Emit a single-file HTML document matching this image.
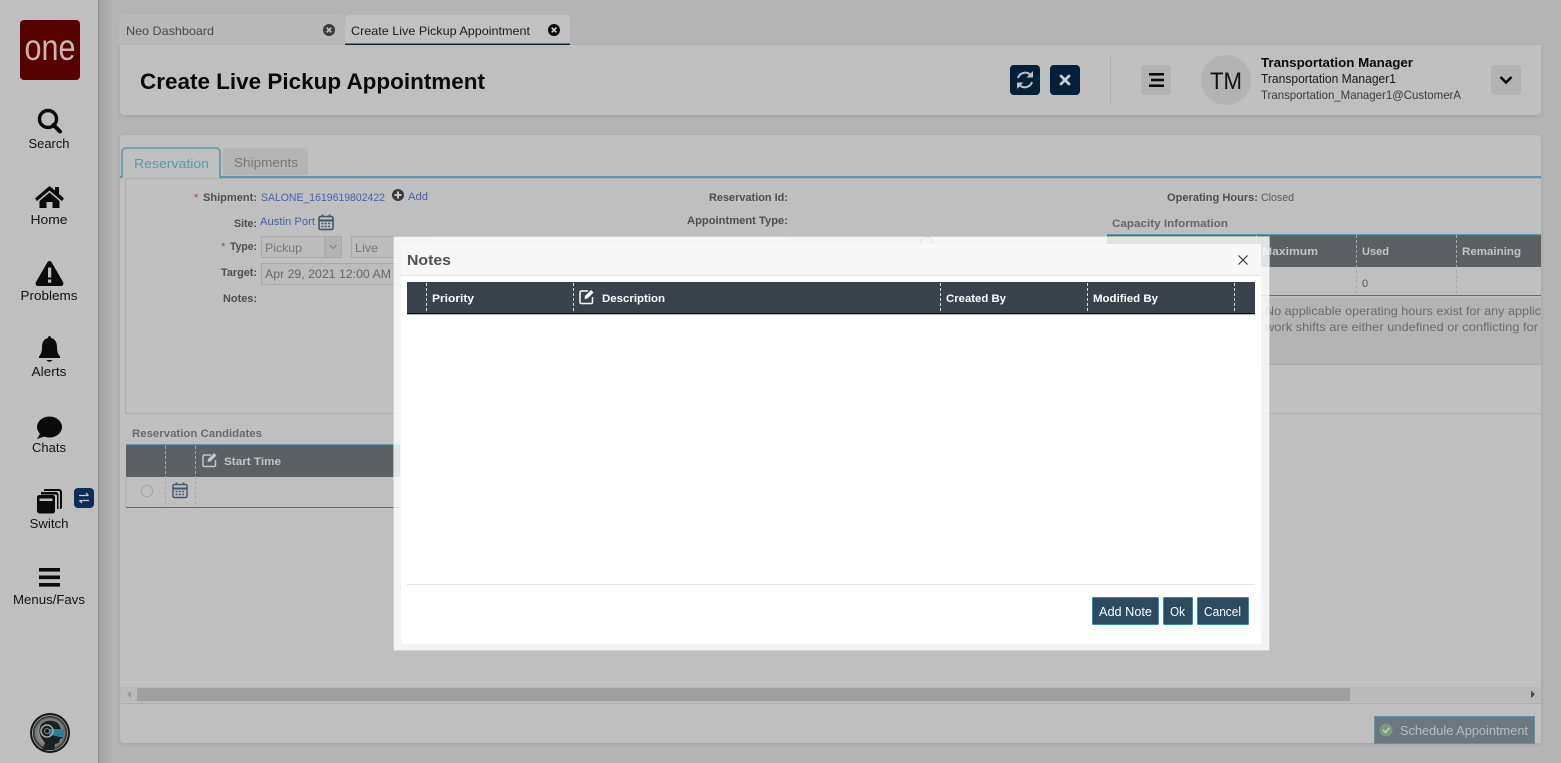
<!DOCTYPE html>
<html lang="en">
<head>
<meta charset="utf-8">
<title>Create Live Pickup Appointment</title>
<style>
html,body{margin:0;padding:0;width:1561px;height:763px;overflow:hidden;background:#b4b4b4}
svg{display:block}
text{font-family:"Liberation Sans",sans-serif;white-space:pre}
.nav{font-size:13px;fill:#111;text-anchor:middle}
.lb{font-size:11px;font-weight:bold;fill:#4f4f4f}
.v{font-size:11px;fill:#5a5a5a}
.lnk{font-size:11px;fill:#4760b0}
.hd{font-size:11px;font-weight:bold;fill:#c4c4c4}
.nh{font-size:11px;font-weight:bold;fill:#fff}
</style>
</head>
<body>
<svg width="1561" height="763" viewBox="0 0 1561 763" xmlns="http://www.w3.org/2000/svg">
<defs>
<linearGradient id="sh" x1="0" x2="1" y1="0" y2="0"><stop offset="0" stop-color="#a4a4a4"/><stop offset="1" stop-color="#b4b4b4"/></linearGradient>
<radialGradient id="av" cx=".5" cy=".5" r=".5"><stop offset="0" stop-color="#d0d0d0"/><stop offset=".72" stop-color="#777"/><stop offset=".85" stop-color="#222"/><stop offset="1" stop-color="#111"/></radialGradient>
<filter id="ps" x="-2%" y="-10%" width="104%" height="120%"><feDropShadow dx="0" dy="1" stdDeviation="2" flood-color="#000" flood-opacity=".12"/></filter>
</defs>

<!-- backgrounds -->
<rect width="1561" height="763" fill="#b4b4b4"/>
<rect x="99" width="14" height="763" fill="url(#sh)"/>
<rect width="98" height="763" fill="#bfbfbf"/>
<rect x="98" width="1" height="763" fill="#8b8b8b"/>

<!-- sidebar -->
<rect x="20" y="20" width="60" height="60" rx="4" fill="#560000"/>
<text x="50" y="60" font-size="37" text-anchor="middle" fill="#c9b3b3" textLength="51" lengthAdjust="spacingAndGlyphs">one</text>

<g fill="#0a0a0a">
<circle cx="48" cy="119" r="8.5" fill="none" stroke="#0a0a0a" stroke-width="3.4"/>
<path d="M53.5 125 L60 131.5" stroke="#0a0a0a" stroke-width="4" stroke-linecap="round"/>
<path d="M49.500 186 L35 198.500 L37 201 L49.500 190.500 L62 201 L64 198.500 L59 194 V187 H55 V190.500 Z"/>
<path d="M49.500 192.500 L39.500 201 V208 H46.500 V202 H52.500 V208 H59.500 V201 Z"/>
<path d="M49.500 261 C48 261 47.500 262 47 263 L36 282 C35 284 36 286 38 286 H61 C63 286 64 284 63 282 L52 263 C51.500 262 51 261 49.500 261 Z"/>
<rect x="48" y="267.500" width="3.200" height="10" fill="#bfbfbf"/>
<rect x="48" y="279.500" width="3.200" height="3.200" fill="#bfbfbf"/>
<path d="M49.500 336 C48.500 336 48 337 48 338 C43.500 339 42 343 42 347 C42 352 41 354 39 356.500 V358 H60 V356.500 C58 354 57 352 57 347 C57 343 55.500 339 51 338 C51 337 50.500 336 49.500 336 Z"/>
<path d="M46 360 H53 L49.500 362 Z"/>
<ellipse cx="49.500" cy="427" rx="12.500" ry="10.500"/>
<path d="M41 432 L37 439 L46 436 Z"/>
<path d="M44 489 H59 C60.500 489 62 490.500 62 492 V507 C62 508.500 61 509 60 509 V493 C60 491.500 59.500 491 58 491 H44 Z"/>
<path d="M41 492 H56 C57.500 492 58.500 493.500 58.500 495 V509 H57 V496 C57 495 56.500 494.500 55 494.500 H41 Z"/>
<path d="M37 497 C37 495.500 38.500 495 40 495 H52.500 C54 495 55 496 55 497.500 V511 C55 512.500 54 513.500 52.500 513.500 H40 C38.500 513.500 37 512.500 37 511 Z"/>
<rect x="39.500" y="498.500" width="13" height="2.500" fill="#bfbfbf"/>
<rect x="39" y="568" width="21" height="3.600"/>
<rect x="39" y="575.500" width="21" height="3.600"/>
<rect x="39" y="583" width="21" height="3.600"/>
</g>
<text class="nav" x="49" y="148" textLength="41" lengthAdjust="spacingAndGlyphs">Search</text>
<text class="nav" x="49" y="224" textLength="37" lengthAdjust="spacingAndGlyphs">Home</text>
<text class="nav" x="49" y="300" textLength="57" lengthAdjust="spacingAndGlyphs">Problems</text>
<text class="nav" x="49" y="376" textLength="35" lengthAdjust="spacingAndGlyphs">Alerts</text>
<text class="nav" x="49" y="452" textLength="34" lengthAdjust="spacingAndGlyphs">Chats</text>
<text class="nav" x="49" y="528" textLength="39" lengthAdjust="spacingAndGlyphs">Switch</text>
<text class="nav" x="49" y="604" textLength="72" lengthAdjust="spacingAndGlyphs">Menus/Favs</text>
<rect x="74" y="488" width="20" height="20" rx="4" fill="#0c2d50"/>
<path d="M79 495.500 H88.500 M86 493 L88.500 495.500 M89 500.500 H79.500 M82 503 L79.500 500.500" fill="none" stroke="#c6ccd2" stroke-width="1.300"/>

<circle cx="50" cy="733" r="20" fill="url(#av)"/>
<circle cx="50" cy="733" r="17.500" fill="none" stroke="#b0b0b0" stroke-width=".8"/>
<path d="M45 743 C41 738 38 733 40 727 C42 721 50 719 56 722 C60 724 62 730 61 734 L63 738 L60 739 L59 743 L55 744 L54 750 H42 Z" fill="#1a1f22"/>
<path d="M49 729 H64 V737 C60 738 55 735 49 735 Z" fill="#2a8098"/>
<circle cx="47" cy="731" r="6" fill="none" stroke="#a8a8a8" stroke-width="1.500"/>
<circle cx="47" cy="731" r="2.500" fill="none" stroke="#8a8a8a" stroke-width="1"/>

<!-- tabs top -->
<path d="M120 45 V19 a4 4 0 0 1 4 -4 H340 a4 4 0 0 1 4 4 V45 Z" fill="#b8b8b8" stroke="#c0c0c0" stroke-width=".6"/>
<text x="126" y="35" font-size="12" fill="#4a4a4a" textLength="88" lengthAdjust="spacingAndGlyphs">Neo Dashboard</text>
<circle cx="329" cy="30" r="6" fill="#3c3c3c"/>
<path d="M326.700 27.700 L331.300 32.300 M331.300 27.700 L326.700 32.300" stroke="#c8c8c8" stroke-width="1.500"/>
<path d="M345 45 V19 a4 4 0 0 1 4 -4 H566 a4 4 0 0 1 4 4 V45 Z" fill="#c1c1c1"/>
<rect x="345" y="43.500" width="225" height="2" fill="#0a2540"/>
<text x="351" y="35" font-size="12" fill="#1c1c1c" textLength="179" lengthAdjust="spacingAndGlyphs">Create Live Pickup Appointment</text>
<circle cx="554" cy="30" r="6" fill="#0a0a0a"/>
<path d="M551.700 27.700 L556.300 32.300 M556.300 27.700 L551.700 32.300" stroke="#d8d8d8" stroke-width="1.500"/>

<!-- header panel -->
<path d="M120 45 H1541 V111 a4 4 0 0 1 -4 4 H124 a4 4 0 0 1 -4 -4 Z" fill="#bfbfbf" filter="url(#ps)"/>
<text x="140" y="89" font-size="22" font-weight="bold" fill="#0a0a0a" textLength="345" lengthAdjust="spacingAndGlyphs">Create Live Pickup Appointment</text>

<rect x="1010" y="65" width="30" height="30" rx="4" fill="#02203a"/>
<path d="M1018 78 A7.500 7.500 0 0 1 1031 75.500 M1032 82 A7.500 7.500 0 0 1 1019 84.500" fill="none" stroke="#bcc3c8" stroke-width="2"/>
<path d="M1033 71 V77.500 H1026.500 Z M1017 89 V82.500 H1023.500 Z" fill="#bcc3c8"/>
<rect x="1050" y="65" width="30" height="30" rx="4" fill="#02203a"/>
<path d="M1061 76 L1069 84 M1069 76 L1061 84" stroke="#c8cdd1" stroke-width="2.800" stroke-linecap="round"/>
<rect x="1110" y="55" width="1" height="50" fill="#adadad"/>
<rect x="1141" y="65" width="30" height="30" rx="4" fill="#b3b3b3"/>
<rect x="1149" y="73" width="15" height="2.600" fill="#0a0a0a"/>
<rect x="1151" y="78.700" width="13" height="2.600" fill="#0a0a0a"/>
<rect x="1149" y="84.400" width="15" height="2.600" fill="#0a0a0a"/>
<ellipse cx="1226" cy="80" rx="25" ry="25" fill="#b3b3b3"/>
<text x="1210" y="89" font-size="24" fill="#111" textLength="32" lengthAdjust="spacingAndGlyphs">TM</text>
<text x="1261" y="67" font-size="13" font-weight="bold" fill="#0a0a0a" textLength="152" lengthAdjust="spacingAndGlyphs">Transportation Manager</text>
<text x="1261" y="83" font-size="12.500" fill="#1a1a1a" textLength="135" lengthAdjust="spacingAndGlyphs">Transportation Manager1</text>
<text x="1261" y="99" font-size="12" fill="#3c3c3c" textLength="200" lengthAdjust="spacingAndGlyphs">Transportation_Manager1@CustomerA</text>
<rect x="1491" y="65" width="30" height="30" rx="4" fill="#b3b3b3"/>
<path d="M1500.500 77 L1506 82.500 L1511.500 77" fill="none" stroke="#0a0a0a" stroke-width="2.600"/>

<!-- main panel -->
<path d="M120 139 a4 4 0 0 1 4 -4 H1537 a4 4 0 0 1 4 4 V743 H124 a4 4 0 0 1 -4 -4 Z" fill="#bfbfbf" filter="url(#ps)"/>
<rect x="120" y="176" width="1421" height="2" fill="#5a97a8"/>
<path d="M122 178 V152 a4 4 0 0 1 4 -4 H216 a4 4 0 0 1 4 4 V178" fill="#bfbfbf" stroke="#5a97a8" stroke-width="1.600"/>
<text x="134" y="168" font-size="13" fill="#5d9aab" textLength="75" lengthAdjust="spacingAndGlyphs">Reservation</text>
<path d="M223 175 V152 a4 4 0 0 1 4 -4 H304 a4 4 0 0 1 4 4 V175 Z" fill="#b4b4b4"/>
<text x="234" y="167" font-size="13" fill="#777" textLength="64" lengthAdjust="spacingAndGlyphs">Shipments</text>
<rect x="125.500" y="178.500" width="1416" height="235" fill="none" stroke="#adadad"/>

<!-- form -->
<text x="194" y="201" font-size="11" fill="#a04a4a">*</text>
<text class="lb" x="203" y="201" textLength="54" lengthAdjust="spacingAndGlyphs">Shipment:</text>
<text class="lnk" x="261" y="201" textLength="124" lengthAdjust="spacingAndGlyphs">SALONE_1619619802422</text>
<circle cx="398" cy="195" r="6" fill="#3a3a3a"/>
<path d="M394.500 195 H401.500 M398 191.500 V198.500" stroke="#c8c8c8" stroke-width="2"/>
<text class="lnk" x="408" y="200" textLength="20" lengthAdjust="spacingAndGlyphs">Add</text>
<text class="lb" x="234" y="227" textLength="23" lengthAdjust="spacingAndGlyphs">Site:</text>
<text class="lnk" x="260" y="225" textLength="55" lengthAdjust="spacingAndGlyphs">Austin Port</text>
<g fill="none" stroke="#3e5262">
<rect x="319" y="216.500" width="14" height="13" rx="1.500" stroke-width="1.500"/>
<path d="M319 220.500 H333" stroke-width="2"/>
<path d="M322.500 214.500 V217 M329.500 214.500 V217" stroke-width="1.600"/>
<path d="M321.500 223.500 H330.500 M321.500 226.500 H330.500" stroke-width="1.500" stroke-dasharray="2 1.300"/>
</g>
<text x="221" y="250" font-size="11" fill="#a04a4a">*</text>
<text class="lb" x="230" y="250" textLength="27" lengthAdjust="spacingAndGlyphs">Type:</text>
<rect x="261.500" y="236.500" width="80" height="21" fill="#bcbcbc" stroke="#a9a9a9"/>
<rect x="325" y="237" width="16" height="20" fill="#b4b4b4"/>
<rect x="324.500" y="236.500" width="1" height="21" fill="#a0a0a0"/>
<path d="M329.500 245 L333 248.500 L336.500 245" fill="none" stroke="#8a8a8a" stroke-width="1.500"/>
<text x="265" y="252" font-size="12" fill="#777" textLength="37" lengthAdjust="spacingAndGlyphs">Pickup</text>
<rect x="351.500" y="236.500" width="80" height="21" fill="#bcbcbc" stroke="#a9a9a9"/>
<text x="355" y="252" font-size="12" fill="#777" textLength="23" lengthAdjust="spacingAndGlyphs">Live</text>
<text class="lb" x="221" y="276" textLength="36" lengthAdjust="spacingAndGlyphs">Target:</text>
<rect x="261.500" y="263.500" width="160" height="21" fill="#bcbcbc" stroke="#a9a9a9"/>
<text x="265" y="278" font-size="12" fill="#686868" textLength="126" lengthAdjust="spacingAndGlyphs">Apr 29, 2021 12:00 AM</text>
<text class="lb" x="223" y="302" textLength="34" lengthAdjust="spacingAndGlyphs">Notes:</text>

<text class="lb" x="709" y="201" textLength="79" lengthAdjust="spacingAndGlyphs">Reservation Id:</text>
<text class="lb" x="687" y="224" textLength="101" lengthAdjust="spacingAndGlyphs">Appointment Type:</text>
<rect x="791.500" y="237.500" width="129" height="22" fill="none" stroke="#a9a9a9"/>
<circle cx="927" cy="243" r="6" fill="none" stroke="#8a8a8a" stroke-width="1.500"/>

<text class="lb" x="1167" y="201" textLength="91" lengthAdjust="spacingAndGlyphs">Operating Hours:</text>
<text class="v" x="1261" y="201" textLength="33" lengthAdjust="spacingAndGlyphs">Closed</text>
<text x="1112" y="227" font-size="11" font-weight="bold" fill="#686868" textLength="116" lengthAdjust="spacingAndGlyphs">Capacity Information</text>

<!-- capacity table -->
<rect x="1107" y="235" width="434" height="32" fill="#5c5f64"/>
<rect x="1107" y="234" width="434" height="1.200" fill="#5a97a8"/>
<path d="M1256.500 235 V295 M1356.500 235 V295 M1456.500 235 V295" stroke="#a9a9a9" stroke-dasharray="3 2"/>
<text class="hd" x="1262" y="255" textLength="56" lengthAdjust="spacingAndGlyphs">Maximum</text>
<text class="hd" x="1362" y="255" textLength="27" lengthAdjust="spacingAndGlyphs">Used</text>
<text class="hd" x="1462" y="255" textLength="59" lengthAdjust="spacingAndGlyphs">Remaining</text>
<text class="v" x="1362" y="287" fill="#6a6a6a">0</text>
<rect x="1107" y="295" width="434" height="1" fill="#686868"/>
<rect x="1107" y="298" width="434" height="66" fill="#b4b4b4"/>
<rect x="1107" y="364" width="434" height="1" fill="#a8a8a8"/>
<text x="1265" y="315" font-size="12" fill="#6a6a6a" textLength="276" lengthAdjust="spacingAndGlyphs">No applicable operating hours exist for any applic</text>
<text x="1265" y="331" font-size="12" fill="#6a6a6a" textLength="273" lengthAdjust="spacingAndGlyphs">work shifts are either undefined or conflicting for</text>

<!-- reservation candidates -->
<text x="132" y="437" font-size="11" font-weight="bold" fill="#6a6a6a" textLength="130" lengthAdjust="spacingAndGlyphs">Reservation Candidates</text>
<rect x="126" y="445" width="274" height="32" fill="#5c5f64"/>
<rect x="126" y="444" width="274" height="1.200" fill="#5a97a8"/>
<path d="M165.500 446 V507 M195.500 446 V507" stroke="#a9a9a9" stroke-dasharray="3 2"/>
<path d="M211 455 H204.500 C203.500 455 203 455.500 203 456.500 V465 C203 466 203.500 466.500 204.500 466.500 H214 C215 466.500 215.500 466 215.500 465 V460" fill="none" stroke="#c4c4c4" stroke-width="1.500"/>
<path d="M208 459 L214 453 L216.500 455.500 L210.500 461.500 L207.500 462 Z" fill="#c4c4c4"/>
<text class="hd" x="224" y="465" textLength="57" lengthAdjust="spacingAndGlyphs">Start Time</text>
<circle cx="147" cy="491" r="5.700" fill="none" stroke="#a4a4a4"/>
<g fill="none" stroke="#46596a">
<rect x="173" y="484.500" width="14" height="13" rx="1.500" stroke-width="1.500"/>
<path d="M173 488.500 H187" stroke-width="2"/>
<path d="M176.500 482.500 V485 M183.500 482.500 V485" stroke-width="1.600"/>
<path d="M175.500 491.500 H184.500 M175.500 494.500 H184.500" stroke-width="1.500" stroke-dasharray="2 1.300"/>
</g>
<rect x="126" y="507" width="274" height="1" fill="#686868"/>
<rect x="125.500" y="476" width="1" height="31" fill="#adadad"/>

<!-- scroll and footer -->
<rect x="120" y="687" width="1421" height="15" fill="#bababa"/>
<rect x="137" y="688" width="1213" height="13" fill="#a0a0a0"/>
<path d="M131 690.500 V698 L127 694.300 Z" fill="#9a9a9a"/>
<path d="M1531 690.500 V698 L1535 694.300 Z" fill="#4a4a4a"/>
<rect x="120" y="703" width="1421" height="1" fill="#adadad"/>
<rect x="1374.500" y="716.500" width="160" height="27" fill="#6c7780" stroke="#5a97a8"/>
<circle cx="1386" cy="730" r="6.500" fill="#7e9a7c"/>
<path d="M1383 730 L1385.300 732.500 L1389.500 727.800" fill="none" stroke="#c8d4c6" stroke-width="1.500"/>
<text x="1400" y="735" font-size="13" fill="#b8bcbf" textLength="128" lengthAdjust="spacingAndGlyphs">Schedule Appointment</text>

<!-- modal -->
<rect x="394" y="237" width="875" height="413" fill="#fff" fill-opacity=".82"/>
<rect x="393.500" y="236.500" width="876" height="414" fill="none" stroke="#d8d8d8" stroke-opacity=".7"/>
<rect x="401" y="244" width="860" height="400" fill="#fff"/>
<rect x="401" y="244" width="860" height="31" fill="#f7f7f7"/>
<rect x="401" y="275" width="860" height="1" fill="#e6e6e6"/>
<text x="407" y="265" font-size="15" font-weight="bold" fill="#505050" textLength="44" lengthAdjust="spacingAndGlyphs">Notes</text>
<path d="M1238.500 255.500 L1247.500 264.500 M1247.500 255.500 L1238.500 264.500" stroke="#3a3a3a" stroke-width="1.200"/>

<rect x="407" y="282" width="848" height="31" fill="#3a424c"/>
<rect x="407" y="313" width="848" height="1.300" fill="#0a0a0a"/>
<path d="M426.500 283 V313 M573.500 283 V313 M940.500 283 V313 M1087.500 283 V313 M1234.500 283 V313" stroke="#dcdcdc" stroke-dasharray="3 2"/>
<text class="nh" x="432" y="302" textLength="42" lengthAdjust="spacingAndGlyphs">Priority</text>
<path d="M588 291 H581.500 C580.500 291 580 291.500 580 292.500 V302 C580 303 580.500 303.500 581.500 303.500 H591 C592 303.500 592.500 303 592.500 302 V297" fill="none" stroke="#fff" stroke-width="1.500"/>
<path d="M585 296 L591 290 L593.500 292.500 L587.500 298.500 L584.500 299 Z" fill="#fff"/>
<text class="nh" x="602" y="302" textLength="63" lengthAdjust="spacingAndGlyphs">Description</text>
<text class="nh" x="946" y="302" textLength="60" lengthAdjust="spacingAndGlyphs">Created By</text>
<text class="nh" x="1093" y="302" textLength="65" lengthAdjust="spacingAndGlyphs">Modified By</text>

<rect x="407" y="584" width="848" height="1" fill="#e4e4e4"/>
<g stroke="#2c90a8" fill="#2c4a60">
<rect x="1092.500" y="597.500" width="66" height="27" rx="1"/>
<rect x="1163.500" y="597.500" width="29" height="27" rx="1"/>
<rect x="1197.500" y="597.500" width="51" height="27" rx="1"/>
</g>
<text x="1099" y="616" font-size="13" fill="#fff" textLength="53" lengthAdjust="spacingAndGlyphs">Add Note</text>
<text x="1170" y="616" font-size="13" fill="#fff" textLength="15" lengthAdjust="spacingAndGlyphs">Ok</text>
<text x="1204" y="616" font-size="13" fill="#fff" textLength="37" lengthAdjust="spacingAndGlyphs">Cancel</text>
</svg>
</body>
</html>
